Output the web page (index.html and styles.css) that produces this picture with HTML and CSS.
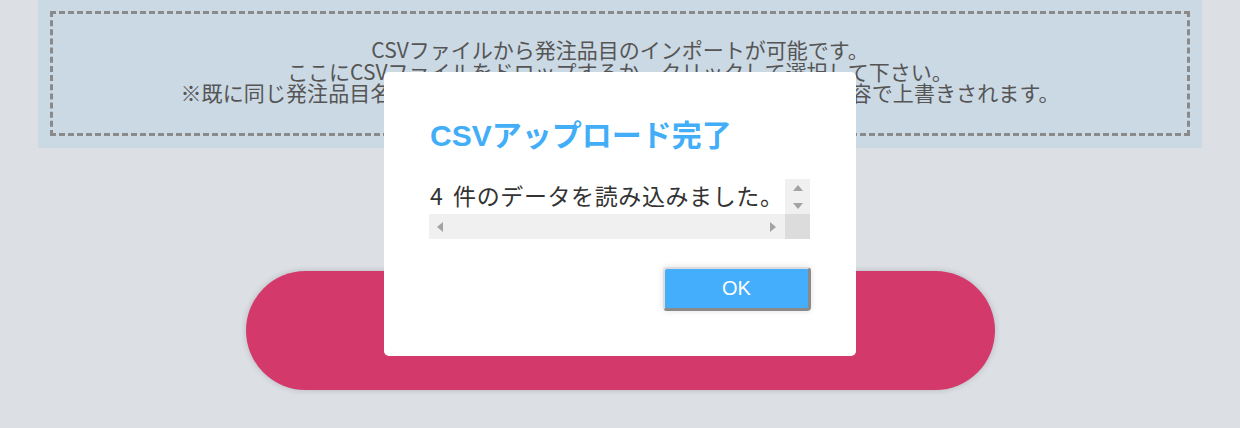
FILE: index.html
```html
<!DOCTYPE html>
<html lang="ja">
<head>
<meta charset="utf-8">
<title>CSVインポート</title>
<link rel="stylesheet" href="styles.css">
</head>
<body>
<main class="page">
  <section class="dropzone">
    <div class="dropzone-inner">
      <p>CSVファイルから発注品目のインポートが可能です。</p>
      <p>ここにCSVファイルをドロップするか、クリックして選択して下さい。</p>
      <p>※既に同じ発注品目名が登録されている場合は、新規CSVファイルの内容で上書きされます。</p>
    </div>
  </section>
  <div class="actions">
    <button class="pill">登録する</button>
  </div>
</main>

<div class="modal">
  <div class="dialog">
    <h2 class="dialog-title">CSVアップロード完了</h2>
    <div class="scrollbox">
      <div class="scroll-content">4 件のデータを読み込みました。</div>
      <div class="vbar">
        <span class="arrow arrow-up"></span>
        <span class="arrow arrow-down"></span>
      </div>
      <div class="hbar">
        <span class="arrow arrow-left"></span>
        <span class="arrow arrow-right"></span>
      </div>
      <div class="corner"></div>
    </div>
    <div class="dialog-footer">
      <button class="ok">OK</button>
    </div>
  </div>
</div>
</body>
</html>
```

FILE: styles.css
```css
html, body {
  margin: 0;
  padding: 0;
}
body {
  background: #dcdfe4;
  font-family: "Noto Sans CJK JP", "Noto Sans", sans-serif;
  width: 1240px;
  height: 428px;
  overflow: hidden;
}
.page {
  padding: 0 38px;
}
.dropzone {
  background: #cbd9e4;
  padding: 11px 12px 12px;
}
.dropzone-inner {
  border: 3px dashed #8a8a8a;
  padding: 25px 0 29px;
  text-align: center;
  color: #555;
  font-size: 21px;
  line-height: 21.5px;
}
.dropzone-inner p {
  margin: 0;
  white-space: nowrap;
}
.dropzone-inner p:last-child {
  letter-spacing: 0.1px;
}
.actions {
  display: flex;
  justify-content: center;
  margin-top: 123px;
}
.pill {
  width: 749px;
  height: 119px;
  border: none;
  border-radius: 60px;
  background: #d33a6b;
  color: #fff;
  font-family: "Noto Sans CJK JP", sans-serif;
  font-size: 24px;
  box-shadow: 0 0 6px rgba(0, 0, 0, 0.18);
}

.modal {
  position: fixed;
  inset: 0;
  display: flex;
  align-items: center;
  justify-content: center;
}
.dialog {
  width: 380px;
  background: #fff;
  border-radius: 5px;
  padding: 46px 46px 45px;
}
.dialog-title {
  margin: 0 0 25px;
  font-family: "Liberation Sans", "Noto Sans CJK JP", sans-serif;
  font-weight: bold;
  font-size: 30px;
  line-height: 36px;
  color: #42aef8;
  white-space: nowrap;
}
.scrollbox {
  display: grid;
  grid-template-columns: 1fr 25px;
  grid-template-rows: 35px 25px;
  margin-left: -1px;
  width: 381px;
}
.scroll-content {
  padding-left: 1px;
  font-size: 23px;
  line-height: 33px;
  letter-spacing: 0.6px;
  word-spacing: 4px;
  color: #333;
  white-space: nowrap;
  overflow: hidden;
}
.vbar {
  background: #f0f0f0;
  display: flex;
  flex-direction: column;
  align-items: center;
  justify-content: space-between;
  padding: 6px 0 5px;
}
.hbar {
  background: #f0f0f0;
  display: flex;
  align-items: center;
  justify-content: space-between;
  padding: 0 9px 0 8px;
}
.corner {
  background: #dcdcdc;
}
.arrow {
  width: 0;
  height: 0;
  display: block;
}
.arrow-up {
  border-left: 5px solid transparent;
  border-right: 5px solid transparent;
  border-bottom: 6px solid #a3a3a3;
}
.arrow-down {
  border-left: 5px solid transparent;
  border-right: 5px solid transparent;
  border-top: 6px solid #a3a3a3;
}
.arrow-left {
  border-top: 5px solid transparent;
  border-bottom: 5px solid transparent;
  border-right: 6px solid #a3a3a3;
}
.arrow-right {
  border-top: 5px solid transparent;
  border-bottom: 5px solid transparent;
  border-left: 6px solid #a3a3a3;
}
.dialog-footer {
  display: flex;
  justify-content: flex-end;
  margin-top: 28px;
  margin-right: -1px;
}
.ok {
  width: 148px;
  height: 44px;
  background: #44aefc;
  color: #fff;
  font-family: "Liberation Sans", Arial, sans-serif;
  font-size: 20px;
  border-style: solid;
  border-width: 2px 3px 3px 2px;
  border-color: #dcdcdc #8a8a8a #8a8a8a #dcdcdc;
  border-radius: 4px;
  box-shadow: 0 0 6px rgba(0, 0, 0, 0.12);
  padding: 0;
}
```
